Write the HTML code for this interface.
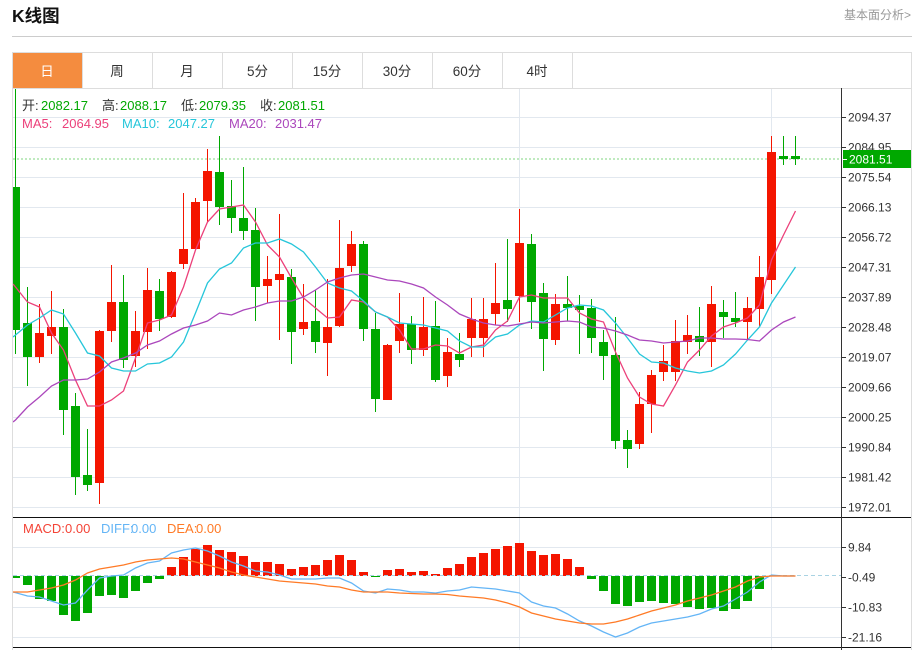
<!DOCTYPE html>
<html lang="zh">
<head>
<meta charset="utf-8">
<title>K线图</title>
<style>
html,body{margin:0;padding:0;background:#fff;width:923px;height:650px;overflow:hidden}
svg{display:block;font-family:"Liberation Sans","Noto Sans CJK SC",sans-serif}
</style>
</head>
<body>
<svg width="923" height="650" viewBox="0 0 923 650" xmlns="http://www.w3.org/2000/svg">
<defs><clipPath id="c"><rect x="13" y="88" width="828" height="562"/></clipPath></defs>
<text x="12" y="22" font-size="17.500" font-weight="bold" fill="#111">K线图</text>
<text x="844" y="19" font-size="12" fill="#999">基本面分析&gt;</text>
<path d="M12 36.500H912" stroke="#ccc" fill="none"/>
<rect x="13" y="53" width="69" height="35" fill="#f48c3f"/>
<path d="M12.500 52V650M911.500 52V650M12 52.500H912M13 88.500H911M82.500 53V88M152.500 53V88M222.500 53V88M292.500 53V88M362.500 53V88M432.500 53V88M502.500 53V88M572.500 53V88" stroke="#ddd" fill="none"/>
<g font-size="13.500" fill="#333" text-anchor="middle">
<text x="47" y="76" fill="#fff">日</text><text x="117" y="76">周</text><text x="187" y="76">月</text><text x="257.500" y="76">5分</text><text x="327" y="76">15分</text><text x="397" y="76">30分</text><text x="467" y="76">60分</text><text x="537" y="76">4时</text>
</g>
<path d="M13 117.500H841M13 147.500H841M13 177.500H841M13 207.500H841M13 237.500H841M13 267.500H841M13 297.500H841M13 327.500H841M13 357.500H841M13 387.500H841M13 417.500H841M13 447.500H841M13 477.500H841M13 507.500H841M13 547.500H841M13 607.500H841M13 637.500H841M519.500 89V650M771.500 89V650" stroke="#e2e8ef" fill="none"/>
<path d="M13 159H841" stroke="#7fd67f" stroke-dasharray="2 2" fill="none"/>
<g clip-path="url(#c)">
<path fill="none" stroke="#00a800" d="M15.500 89V354M27.500 287V386M63.500 309V435M75.500 393V495M87.500 429V491M123.500 275V368M159.500 279V331M219.500 136V225M231.500 180V233M243.500 167V240M255.500 208V321M291.500 269V364M315.500 290V353M363.500 241V341M375.500 313V412M411.500 316V364M435.500 301V382M459.500 333V367M507.500 239V322M531.500 234V329M543.500 283V371M567.500 276V321M579.500 295V354M591.500 299V353M603.500 330V380M615.500 317V449M627.500 430V468M699.500 307V356M723.500 300V338M735.500 292V327M783.500 136V165M795.500 136V165"/>
<path fill="none" stroke="#00a800" stroke-width="9" d="M15.500 187V330M27.500 323V357M63.500 327V410M75.500 406V477M87.500 475V485M123.500 302V360M159.500 291V319M219.500 172V207M231.500 206V218M243.500 218V231M255.500 230V287M291.500 277V332M315.500 321V342M363.500 244V329M375.500 329V399M411.500 324V350M435.500 326V380M459.500 354V360M507.500 300V309M531.500 244V302M543.500 293V339M567.500 304V308M579.500 306V310M591.500 308V338M603.500 342V356M615.500 355V441M627.500 440V449M699.500 336V342M723.500 312V317M735.500 318V322M783.500 156V159M795.500 156V159"/>
<path fill="none" stroke="#f41500" d="M39.500 304V363M51.500 291V354M99.500 330V504M111.500 265V342M135.500 311V367M147.500 268V349M171.500 271V318M183.500 193V269M195.500 198V249M207.500 149V222M267.500 256V303M279.500 214V340M303.500 284V335M327.500 279V376M339.500 220V327M351.500 231V272M387.500 344V400M399.500 293V353M423.500 297V356M447.500 338V387M471.500 298V357M483.500 298V357M495.500 263V325M519.500 209V322M555.500 294V345M639.500 392V449M651.500 370V433M663.500 345V381M675.500 320V381M687.500 315V354M711.500 286V367M747.500 297V340M759.500 256V327M771.500 136V294"/>
<path fill="none" stroke="#f41500" stroke-width="9" d="M39.500 333V357M51.500 327V336M99.500 331V483M111.500 302V331M135.500 331V356M147.500 290V332M171.500 272V317M183.500 249V264M195.500 202V249M207.500 171V201M267.500 279V286M279.500 274V280M303.500 322V329M327.500 327V343M339.500 268V326M351.500 244V266M387.500 345V400M399.500 324V341M423.500 327V350M447.500 352V376M471.500 319V338M483.500 319V338M495.500 303V314M519.500 243V296M555.500 304V340M639.500 404V444M651.500 375V404M663.500 361V372M675.500 341V372M687.500 335V342M711.500 304V342M747.500 308V322M759.500 277V309M771.500 152V280"/>
<polyline fill="none" stroke="#ec407a" stroke-width="1.300" points="13,284 15.500,287 27.500,302 39.500,307 51.500,333 63.500,350 75.500,380 87.500,406 99.500,406 111.500,400 123.500,391 135.500,358 147.500,323 159.500,320 171.500,315 183.500,287 195.500,250 207.500,222 219.500,209 231.500,207 243.500,205 255.500,222 267.500,245 279.500,257 291.500,278 303.500,298 315.500,308 327.500,318 339.500,317 351.500,300 363.500,302 375.500,312 387.500,317 399.500,330 411.500,349 423.500,349 435.500,345 447.500,346 459.500,353 471.500,347 483.500,345 495.500,330 507.500,321 519.500,297 531.500,295 543.500,298 555.500,298 567.500,298 579.500,313 591.500,319 603.500,322 615.500,352 627.500,378 639.500,397 651.500,404 663.500,406 675.500,385 687.500,362 699.500,350 711.500,336 723.500,327 735.500,323 747.500,318 759.500,305 771.500,260 783.500,235 795.500,211"/>
<polyline fill="none" stroke="#26c6da" stroke-width="1.300" points="13,337 15.500,335 27.500,325 39.500,318 51.500,310 63.500,314 75.500,333 87.500,353 99.500,356 111.500,368 123.500,371 135.500,371 147.500,364 159.500,363 171.500,357 183.500,342 195.500,313 207.500,283 219.500,269 231.500,263 243.500,248 255.500,243 267.500,243 279.500,239 291.500,244 303.500,252 315.500,267 327.500,283 339.500,288 351.500,291 363.500,301 375.500,312 387.500,317 399.500,323 411.500,324 423.500,325 435.500,328 447.500,331 459.500,341 471.500,347 483.500,347 495.500,337 507.500,334 519.500,325 531.500,321 543.500,322 555.500,315 567.500,308 579.500,305 591.500,306 603.500,310 615.500,323 627.500,338 639.500,354 651.500,362 663.500,363 675.500,368 687.500,371 699.500,373 711.500,371 723.500,365 735.500,354 747.500,340 759.500,327 771.500,303 783.500,285 795.500,267"/>
<polyline fill="none" stroke="#ab47bc" stroke-width="1.300" points="13,422 15.500,420 27.500,407 39.500,397 51.500,386 63.500,380 75.500,380 87.500,379 99.500,372 111.500,362 123.500,358 135.500,353 147.500,345 159.500,341 171.500,334 183.500,328 195.500,325 207.500,321 219.500,313 231.500,315 243.500,310 255.500,307 267.500,303 279.500,301 291.500,301 303.500,297 315.500,290 327.500,282 339.500,278 351.500,275 363.500,274 375.500,277 387.500,280 399.500,281 411.500,284 423.500,288 435.500,297 447.500,305 459.500,314 471.500,319 483.500,323 495.500,325 507.500,326 519.500,324 531.500,322 543.500,323 555.500,322 567.500,321 579.500,322 591.500,327 603.500,328 615.500,331 627.500,335 639.500,340 651.500,341 663.500,343 675.500,342 687.500,341 699.500,338 711.500,338 723.500,339 735.500,339 747.500,339.500 759.500,341 771.500,330 783.500,322 795.500,317"/>
<path fill="none" stroke="#00a800" stroke-width="9" d="M15.500 576V578M27.500 576V585M39.500 576V599M51.500 576V601M63.500 576V615M75.500 576V621M87.500 576V613M99.500 576V596M111.500 576V595M123.500 576V598M135.500 576V591M147.500 576V583M159.500 576V579M375.500 576V577M591.500 576V579M603.500 576V591M615.500 576V604M627.500 576V606M639.500 576V602M651.500 576V601M663.500 576V603M675.500 576V604M687.500 576V607M699.500 576V609M711.500 576V608M723.500 576V611M735.500 576V609M747.500 576V601M759.500 576V589"/>
<path fill="none" stroke="#f41500" stroke-width="9" d="M171.500 567V576M183.500 557V576M195.500 549V576M207.500 545V576M219.500 550V576M231.500 552V576M243.500 556V576M255.500 562V576M267.500 562V576M279.500 564V576M291.500 569V576M303.500 567V576M315.500 565V576M327.500 560V576M339.500 555V576M351.500 560V576M363.500 572V576M387.500 570V576M399.500 569V576M411.500 572V576M423.500 571V576M435.500 574V576M447.500 568V576M459.500 564V576M471.500 557V576M483.500 553V576M495.500 549V576M507.500 546V576M519.500 543V576M531.500 551V576M543.500 555V576M555.500 554V576M567.500 559V576M579.500 567V576"/>
<path d="M13 575.500H841" stroke="#a9d3e3" stroke-dasharray="4 3" fill="none"/>
<polyline fill="none" stroke="#64b5f6" stroke-width="1.300" points="13,592 27.500,596 39.500,597 51.500,601 63.500,605 75.500,603 87.500,590 99.500,578 111.500,576 123.500,575 135.500,568 147.500,563 159.500,561 171.500,553 183.500,550 195.500,548 207.500,551 219.500,556 231.500,562 243.500,566 255.500,571 267.500,572 279.500,575 291.500,579 303.500,579 315.500,579 327.500,578 339.500,578 351.500,583 363.500,591 375.500,593 387.500,589 399.500,590 411.500,592 423.500,592 435.500,593 447.500,591 459.500,590 471.500,587 483.500,588 495.500,589 507.500,591 519.500,593 531.500,602 543.500,606 555.500,608 567.500,614 579.500,621 591.500,626 603.500,632 615.500,637 627.500,633 639.500,627 651.500,623 663.500,621 675.500,619 687.500,617 699.500,614 711.500,609 723.500,606 735.500,599 747.500,592 759.500,582 771.500,575 783.500,576 795.500,576"/>
<polyline fill="none" stroke="#ff7a26" stroke-width="1.300" points="13,592 27.500,592 39.500,590 51.500,588 63.500,585 75.500,580 87.500,573 99.500,569 111.500,567 123.500,565 135.500,562 147.500,560 159.500,559 171.500,558 183.500,559 195.500,562 207.500,565 219.500,568 231.500,572 243.500,575 255.500,577 267.500,579 279.500,581 291.500,582 303.500,583 315.500,584 327.500,586 339.500,587 351.500,590 363.500,592 375.500,592 387.500,592 399.500,593 411.500,593.500 423.500,594 435.500,594 447.500,594.500 459.500,596 471.500,597 483.500,598 495.500,600 507.500,603 519.500,607 531.500,613 543.500,616 555.500,619 567.500,621 579.500,623 591.500,624 603.500,624 615.500,622 627.500,619 639.500,615 651.500,611 663.500,608 675.500,605 687.500,601 699.500,598 711.500,595 723.500,591 735.500,587 747.500,581 759.500,577 771.500,576 783.500,576 795.500,576"/>
</g>
<path d="M13 517.500H911M13 647.500H911" stroke="#111" fill="none"/>
<path d="M841.500 88V650" stroke="#333" fill="none"/>
<path d="M841 117.500H846M841 147.500H846M841 177.500H846M841 207.500H846M841 237.500H846M841 267.500H846M841 297.500H846M841 327.500H846M841 357.500H846M841 387.500H846M841 417.500H846M841 447.500H846M841 477.500H846M841 507.500H846M841 547.500H846M841 577.500H846M841 607.500H846M841 637.500H846" stroke="#333" fill="none"/>
<g font-size="12" fill="#333">
<text x="848" y="121.500">2094.37</text><text x="848" y="151.500">2084.95</text><text x="848" y="181.500">2075.54</text><text x="848" y="211.500">2066.13</text><text x="848" y="241.500">2056.72</text><text x="848" y="271.500">2047.31</text><text x="848" y="301.500">2037.89</text><text x="848" y="331.500">2028.48</text><text x="848" y="361.500">2019.07</text><text x="848" y="391.500">2009.66</text><text x="848" y="421.500">2000.25</text><text x="848" y="451.500">1990.84</text><text x="848" y="481.500">1981.42</text><text x="848" y="511.500">1972.01</text>
<text x="848" y="551.500">9.84</text><text x="848" y="581.500">-0.49</text><text x="848" y="611.500">-10.83</text><text x="848" y="641.500">-21.16</text>
</g>
<rect x="843" y="150" width="68" height="18" fill="#00a800"/>
<path d="M843 159.500H847" stroke="#fff" fill="none"/>
<text x="849" y="163.500" font-size="12" fill="#fff">2081.51</text>
<g font-size="13">
<text x="22" y="110" fill="#333">开:</text><text x="41" y="110" fill="#00a800">2082.17</text>
<text x="102" y="110" fill="#333">高:</text><text x="120" y="110" fill="#00a800">2088.17</text>
<text x="181" y="110" fill="#333">低:</text><text x="199" y="110" fill="#00a800">2079.35</text>
<text x="260" y="110" fill="#333">收:</text><text x="278" y="110" fill="#00a800">2081.51</text>
<text x="22" y="128" fill="#ec407a">MA5:</text><text x="62" y="128" fill="#ec407a">2064.95</text>
<text x="122" y="128" fill="#26c6da">MA10:</text><text x="168" y="128" fill="#26c6da">2047.27</text>
<text x="229" y="128" fill="#ab47bc">MA20:</text><text x="275" y="128" fill="#ab47bc">2031.47</text>
<text x="23" y="533" fill="#f44336">MACD:</text><text x="65" y="533" fill="#f44336">0.00</text>
<text x="101" y="533" fill="#64b5f6">DIFF:</text><text x="131" y="533" fill="#64b5f6">0.00</text>
<text x="167" y="533" fill="#ff7a26">DEA:</text><text x="196" y="533" fill="#ff7a26">0.00</text>
</g>
</svg>
</body>
</html>
